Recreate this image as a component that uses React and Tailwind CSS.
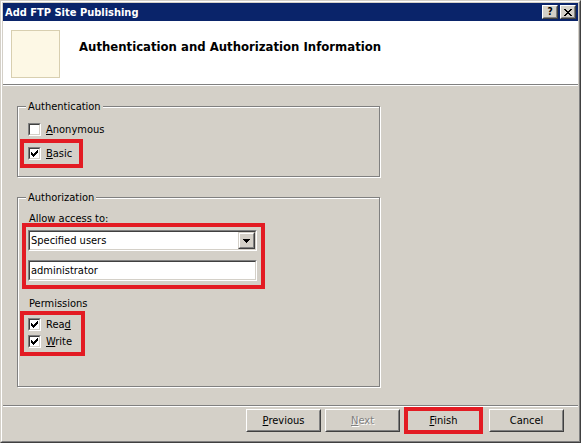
import React from "react";

const FONT = { fontFamily: '"DejaVu Sans Condensed", "DejaVu Sans", Tahoma, sans-serif' };

function CheckMark() {
  const cols = [[2, 4], [3, 5], [4, 6], [3, 5], [2, 4], [1, 3], [0, 2]];
  return (
    <svg width="7" height="7" viewBox="0 0 7 7" shapeRendering="crispEdges">
      {cols.map(([a, b], i) => (
        <rect key={i} x={i} y={a} width="1" height={b - a + 1} fill="#000" />
      ))}
    </svg>
  );
}

function Check({ checked }) {
  return (
    <span className="flex w-[13px] h-[13px] shrink-0 border border-t-[#808080] border-l-[#808080] border-r-white border-b-white">
      <span className="flex flex-1 items-center justify-center border border-t-[#404040] border-l-[#404040] border-r-[#d4d0c8] border-b-[#d4d0c8] bg-white">
        {checked && <CheckMark />}
      </span>
    </span>
  );
}

function U({ children }) {
  return <span className="underline underline-offset-[1px]">{children}</span>;
}

function Button({ children, disabled, className = "" }) {
  return (
    <div className={"w-[75px] h-[23px] border border-t-white border-l-white border-r-[#404040] border-b-[#404040] " + className}>
      <div
        className={
          "flex h-full items-center justify-center border border-t-[#d4d0c8] border-l-[#d4d0c8] border-r-[#808080] border-b-[#808080] " +
          (disabled ? "text-[#808080] [text-shadow:1px_1px_0_#fff]" : "text-black")
        }
      >
        {children}
      </div>
    </div>
  );
}

function Sunken({ children, className = "" }) {
  return (
    <div className={"border border-t-[#808080] border-l-[#808080] border-r-white border-b-white " + className}>
      <div className="flex h-full items-center border border-t-[#404040] border-l-[#404040] border-r-[#d4d0c8] border-b-[#d4d0c8] bg-white">
        {children}
      </div>
    </div>
  );
}

function TitleBtn({ children }) {
  return (
    <div className="w-[16px] h-[14px] border border-t-white border-l-white border-r-[#404040] border-b-[#404040] bg-[#d4d0c8]">
      <div className="flex h-full items-center justify-center border border-t-[#d4d0c8] border-l-[#d4d0c8] border-r-[#808080] border-b-[#808080]">
        {children}
      </div>
    </div>
  );
}

function Group({ label, className = "", children }) {
  return (
    <div className={"relative ml-[14px] w-[363px] border border-[#808080] shadow-[inset_1px_1px_0_#fff,1px_1px_0_#fff] " + className}>
      <span className="absolute left-[8px] top-[-7px] bg-[#d4d0c8] px-[2px] leading-[13px]">{label}</span>
      {children}
    </div>
  );
}

export default function App() {
  return (
    <div className="w-[581px] h-[443px] text-[11px] leading-[13px] text-black select-none" style={FONT}>
      <div className="w-full h-full border border-t-[#d4d0c8] border-l-[#d4d0c8] border-r-[#404040] border-b-[#404040] bg-[#d4d0c8]">
        <div className="flex w-full h-full flex-col border border-t-white border-l-white border-r-[#808080] border-b-[#808080] p-[1px]">
          {/* Title bar */}
          <div className="flex h-[18px] items-center justify-between bg-[#0a246a] pl-[2px] pr-[2px]">
            <span className="font-bold text-white text-[11px]">Add FTP Site Publishing</span>
            <div className="flex gap-[2px]">
              <TitleBtn>
                <span className="font-bold text-[10px] leading-[10px]">?</span>
              </TitleBtn>
              <TitleBtn>
                <svg width="8" height="7" viewBox="0 0 8 7" shapeRendering="crispEdges">
                  <path d="M0 0h2v1h-2z M6 0h2v1h-2z M1 1h2v1h-2z M5 1h2v1h-2z M2 2h4v1h-4z M3 3h2v1h-2z M2 4h4v1h-4z M1 5h2v1h-2z M5 5h2v1h-2z M0 6h2v1h-2z M6 6h2v1h-2z" fill="#000" />
                </svg>
              </TitleBtn>
            </div>
          </div>

          {/* Header */}
          <div className="flex h-[63px] items-start bg-white">
            <div className="ml-[8px] mt-[9px] w-[49px] h-[48px] border border-[#d8cfb0] bg-[#fdf8e5]" />
            <div className="ml-[19px] mt-[18px] text-[13px] leading-[16px] font-bold">Authentication and Authorization Information</div>
          </div>
          <div className="h-[1px] bg-[#808080]" />
          <div className="h-[1px] bg-white" />

          {/* Body */}
          <div className="flex flex-1 flex-col">
            <Group label="Authentication" className="mt-[20px] h-[71px]">
              <div className="flex flex-col gap-[11px] pl-[10px] pt-[16px]">
                <div className="flex items-center gap-[5px]">
                  <Check />
                  <span>
                    <U>A</U>nonymous
                  </span>
                </div>
                <div className="flex w-[47px] items-center gap-[5px] outline-4 outline-[#e31b23] outline-offset-4">
                  <Check checked />
                  <span>
                    <U>B</U>asic
                  </span>
                </div>
              </div>
            </Group>

            <Group label="Authorization" className="mt-[20px] h-[190px]">
              <div className="pl-[11px] pt-[14px]">
                Allow a<U>c</U>cess to:
              </div>
              <div className="ml-[8px] mt-[2px] w-[235px] pl-[2px] pt-[3px] pr-[4px] pb-[4px] outline-4 outline-[#e31b23]">
                <Sunken className="h-[21px]">
                  <span className="flex-1 pl-[1px]">Specified users</span>
                  <div className="w-[17px] h-[17px] border border-t-[#d4d0c8] border-l-[#d4d0c8] border-r-[#404040] border-b-[#404040] bg-[#d4d0c8]">
                    <div className="flex h-full items-center justify-center border border-t-white border-l-white border-r-[#808080] border-b-[#808080]">
                      <svg width="7" height="4" viewBox="0 0 7 4" shapeRendering="crispEdges">
                        <path d="M0 0h7v1h-7z M1 1h5v1h-5z M2 2h3v1h-3z M3 3h1v1h-1z" fill="#000" />
                      </svg>
                    </div>
                  </div>
                </Sunken>
                <Sunken className="mt-[9px] h-[21px]">
                  <span className="pl-[1px]">administrator</span>
                </Sunken>
              </div>
              <div className="pl-[11px] mt-[12px]">Permissions</div>
              <div className="ml-[6px] mt-[5px] flex w-[57px] flex-col gap-[4px] pl-[4px] pt-[3px] pb-[4px] outline-4 outline-[#e31b23]">
                <div className="flex items-center gap-[5px]">
                  <Check checked />
                  <span>
                    Rea<U>d</U>
                  </span>
                </div>
                <div className="flex items-center gap-[5px]">
                  <Check checked />
                  <span>
                    <U>W</U>rite
                  </span>
                </div>
              </div>
            </Group>

            <div className="mt-auto h-[1px] bg-[#808080]" />
            <div className="h-[1px] bg-white" />
            <div className="flex h-[33px] items-start justify-end pt-[2px] pr-[14px]">
              <Button>
                <span>
                  <U>P</U>revious
                </span>
              </Button>
              <Button disabled className="ml-[4px]">
                <span>
                  <U>N</U>ext
                </span>
              </Button>
              <Button className="ml-[6px] outline-4 outline-[#e31b23] outline-offset-[-2px]">
                <span>
                  <U>F</U>inish
                </span>
              </Button>
              <Button className="ml-[8px]">Cancel</Button>
            </div>
          </div>
        </div>
      </div>
    </div>
  );
}
